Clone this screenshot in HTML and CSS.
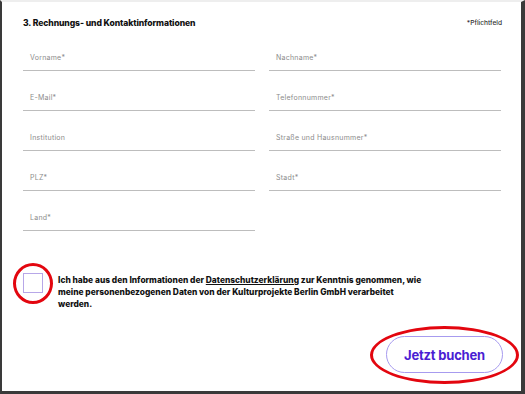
FILE: index.html
```html
<!DOCTYPE html>
<html lang="de">
<head>
<meta charset="UTF-8" />
<meta name="viewport" content="width=device-width, initial-scale=1.0" />
<title>Rechnungs- und Kontaktinformationen</title>
<link rel="stylesheet" href="styles.css">
</head>
<body>

<div class="frame">
  <div class="section-head">
    <h2>3. Rechnungs- und Kontaktinformationen</h2>
    <span class="required-note">*Pflichtfeld</span>
  </div>

  <form class="fields" autocomplete="off">
    <div class="field"><label>Vorname*</label></div>
    <div class="field"><label>Nachname*</label></div>
    <div class="field"><label>E-Mail*</label></div>
    <div class="field"><label>Telefonnummer*</label></div>
    <div class="field"><label>Institution</label></div>
    <div class="field"><label>Straße und Hausnummer*</label></div>
    <div class="field"><label>PLZ*</label></div>
    <div class="field"><label>Stadt*</label></div>
    <div class="field"><label>Land*</label></div>
  </form>

  <div class="consent">
    <div class="checkbox-wrap">
      <span class="checkbox"></span>
      <span class="mark mark-circle"></span>
    </div>
    <p class="consent-text">Ich habe aus den Informationen der <a href="#">Datenschutzerklärung</a> zur Kenntnis genommen, wie<br>
      meine personenbezogenen Daten von der Kulturprojekte Berlin GmbH verarbeitet<br>
      werden.</p>
  </div>

  <div class="actions">
    <div class="button-wrap">
      <button type="button" class="book-btn">Jetzt buchen</button>
      <span class="mark mark-ellipse"></span>
    </div>
  </div>
</div>

</body>
</html>
```

FILE: styles.css
```css
* {
  box-sizing: border-box;
  margin: 0;
  padding: 0;
}

body {
  font-family: 'Inter', 'Liberation Sans', sans-serif;
  background: #fff;
  color: #111;
}

.frame {
  width: 525px;
  height: 394px;
  overflow: hidden;
  border-top: 2px solid #eeeeee;
  border-left: 2px solid #3a3a3a;
  border-right: 4px solid #3a3a3a;
  border-bottom: 3px solid #3a3a3a;
  padding: 16px 18px 0 21px;
}

.section-head {
  display: flex;
  justify-content: space-between;
  align-items: center;
  height: 10px;
  margin-bottom: 3px;
}

h2 {
  font-size: 8.6px;
  font-weight: 800;
  letter-spacing: -0.1px;
  line-height: 10px;
}

.required-note {
  font-size: 6.6px;
  font-weight: 500;
  color: #333;
  padding-right: 1px;
}

/* Form fields */
.fields {
  display: grid;
  grid-template-columns: 232px 232px;
  column-gap: 14px;
}

.field {
  height: 40px;
  border-bottom: 1px solid #bdbdbd;
  padding: 22px 0 0 7px;
}

.field label {
  display: block;
  font-size: 7px;
  line-height: 9px;
  color: #8c8c8c;
  letter-spacing: 0.25px;
}

/* Consent */
.consent {
  display: flex;
  gap: 15px;
  margin-top: 42px;
}

.checkbox-wrap {
  position: relative;
  width: 20px;
  height: 20px;
  flex-shrink: 0;
}

.checkbox {
  display: block;
  width: 20px;
  height: 20px;
  border: 1px solid #b7a7e8;
}

.consent-text {
  margin-top: 1px;
  font-size: 8.4px;
  font-weight: 800;
  line-height: 12px;
  color: #111;
  white-space: nowrap;
}

.consent-text a {
  color: #111;
  text-decoration: underline;
  text-underline-offset: 1px;
}

/* Button */
.actions {
  display: flex;
  justify-content: flex-end;
  margin-top: 26px;
}

.button-wrap {
  position: relative;
}

.book-btn {
  width: 117px;
  height: 37px;
  border: 1px solid #a79bef;
  border-radius: 19px;
  background: #fff;
  color: #4a1ed3;
  font-family: 'Inter', 'Liberation Sans', sans-serif;
  font-size: 13px;
  font-weight: 700;
  letter-spacing: -0.2px;
  cursor: pointer;
}

/* Red highlight marks drawn over the content */
.mark {
  position: absolute;
  border: 3px solid #e3060f;
  border-radius: 50%;
  pointer-events: none;
}

.mark-circle {
  left: -10px;
  top: -10px;
  width: 40px;
  height: 41px;
}

.mark-ellipse {
  left: -16px;
  top: -10px;
  width: 149px;
  height: 58px;
}
```
